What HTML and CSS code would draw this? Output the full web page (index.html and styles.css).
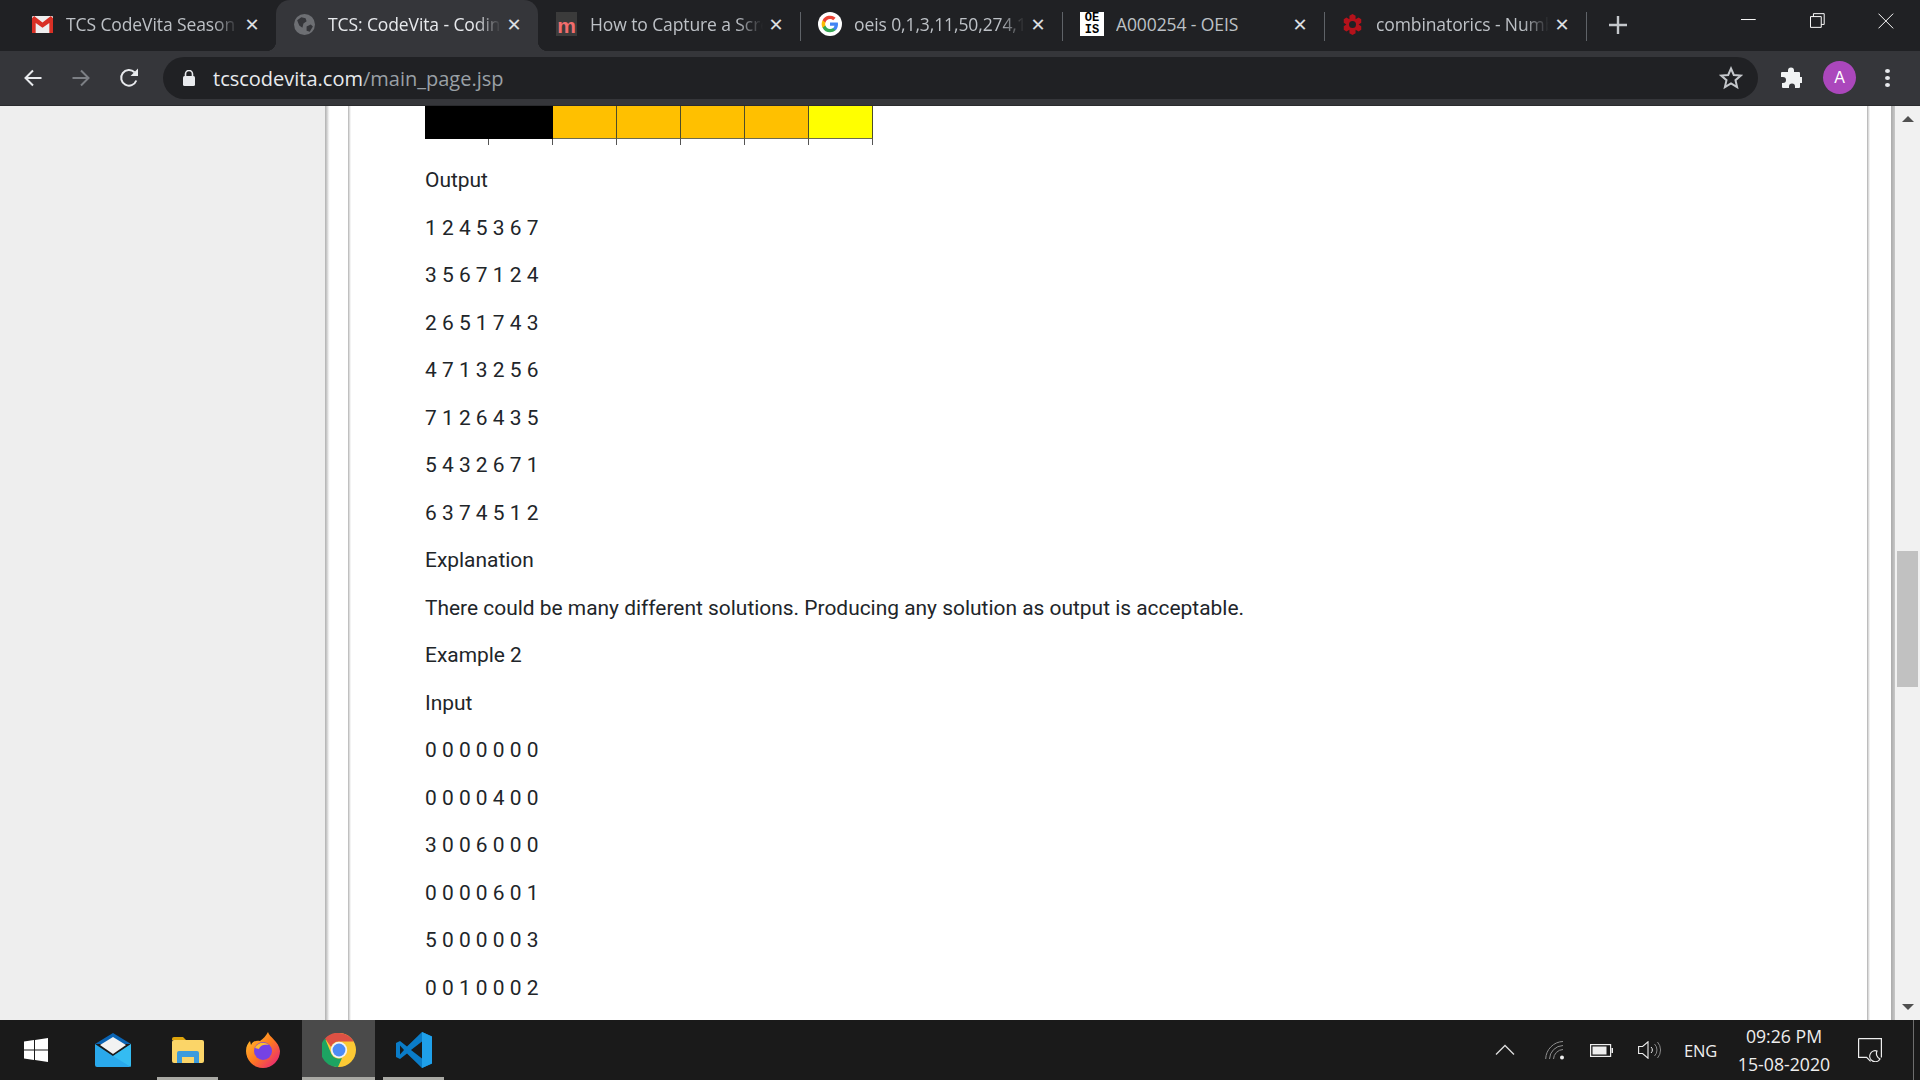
FILE: index.html
```html
<!DOCTYPE html>
<html>
<head>
	<title>TCS: CodeVita - Coding</title>
	<link rel="stylesheet" href="styles.css">
</head>
<body>

<!--Tab strip -->
<div class="tabstrip">
	<div class="tab">
		<svg class="favicon" viewBox="0 0 20 16"><rect width="20" height="16" rx="1" fill="#eee"/><path d="M0 2v14h3.500V6.500L10 11l6.500-4.500V16H20V2l-2-2-8 6-8-6z" fill="#d93025"/></svg>
		<span class="tab-title">TCS CodeVita Season 9</span>
		<span class="tab-close">&#x2715;</span>
	</div>
	<div class="tab active">
		<svg class="favicon" viewBox="0 0 20 20"><circle cx="10" cy="10" r="10" fill="#6d6f73"/><path d="M3 6l4-3 4 1 1 3-3 2-1 4-3-2zM12 12l4-2 2 2-3 5-3-1z" fill="#35363a"/></svg>
		<span class="tab-title">TCS: CodeVita - Coding Contest</span>
		<span class="tab-close">&#x2715;</span>
	</div>
	<div class="tab sep">
		<span class="favicon fav-m">m</span>
		<span class="tab-title">How to Capture a Screenshot</span>
		<span class="tab-close">&#x2715;</span>
	</div>
	<div class="tab sep">
		<svg class="favicon fav-g" viewBox="0 0 24 24"><circle cx="12" cy="12" r="12" fill="#fff"/><path d="M20 12.200c0-.6-.1-1.200-.2-1.700H12v3.200h4.500a3.900 3.900 0 0 1-1.700 2.500v2.100h2.700c1.600-1.400 2.500-3.500 2.500-6.100z" fill="#4285f4"/><path d="M12 20.300c2.200 0 4.100-.7 5.500-2l-2.700-2.100c-.7.500-1.700.8-2.800.8-2.200 0-4-1.500-4.600-3.400H4.600v2.200a8.300 8.300 0 0 0 7.400 4.500z" fill="#34a853"/><path d="M7.400 13.600a5 5 0 0 1 0-3.200V8.200H4.600a8.300 8.300 0 0 0 0 7.600z" fill="#fbbc05"/><path d="M12 7c1.200 0 2.300.4 3.200 1.200l2.400-2.400A8.300 8.300 0 0 0 4.600 8.200l2.800 2.200C8 8.500 9.800 7 12 7z" fill="#ea4335"/></svg>
		<span class="tab-title">oeis 0,1,3,11,50,274,1764 - Google</span>
		<span class="tab-close">&#x2715;</span>
	</div>
	<div class="tab sep">
		<span class="favicon fav-oeis"><span>OE</span><span>IS</span></span>
		<span class="tab-title plain">A000254 - OEIS</span>
		<span class="tab-close">&#x2715;</span>
	</div>
	<div class="tab sep">
		<svg class="favicon" viewBox="0 0 20 24"><path d="M10 0l3.500 2v4L17 4l3 2v4l-3 2 3 2v4l-3 2-3.500-2v4L10 24l-3.500-2v-4L3 20l-3-2v-4l3-2-3-2V6l3-2 3.500 2V2z" fill="#b5121b"/><circle cx="10" cy="12" r="4" fill="#202124"/></svg>
		<span class="tab-title">combinatorics - Number of</span>
		<span class="tab-close">&#x2715;</span>
	</div>
	<svg class="new-tab" viewBox="0 0 18 18"><path d="M9 0v18M0 9h18" stroke="#c4c7cb" stroke-width="2.400"/></svg>
	<div class="window-btns">
		<svg width="16" height="16" viewBox="0 0 16 16"><path d="M0 6.500h15" stroke="#fff"/></svg>
		<svg width="16" height="16" viewBox="0 0 16 16"><path d="M.5 3.500h11v11H.5zM3.500 3.500V.5h11v11h-3" fill="none" stroke="#fff"/></svg>
		<svg width="16" height="16" viewBox="0 0 16 16"><path d="M.5.500l15 15M15.500.5l-15 15" stroke="#fff"/></svg>
	</div>
</div>

<!--Address bar -->
<div class="toolbar">
	<svg class="tool-icon first" viewBox="0 0 20 20"><path d="M18.500 10H3M10 2.500L2.500 10l7.500 7.500" fill="none" stroke="#e8eaed" stroke-width="2"/></svg>
	<svg class="tool-icon" viewBox="0 0 20 20"><path d="M1.500 10H17M10 2.500l7.500 7.500-7.500 7.500" fill="none" stroke="#7c7f84" stroke-width="2"/></svg>
	<svg class="tool-icon reload" viewBox="0 0 20 20"><path d="M17.300 12.500A7.800 7.800 0 1 1 15.500 4.300" fill="none" stroke="#e8eaed" stroke-width="2"/><path d="M19 .5V8h-7.500z" fill="#e8eaed"/></svg>
	<div class="omnibox">
		<svg class="lock" viewBox="0 0 12 16"><path d="M2.500 6V4a3.500 3.500 0 0 1 7 0v2" fill="none" stroke="#e8eaed" stroke-width="1.600"/><rect y="6" width="12" height="10" rx="1.500" fill="#e8eaed"/></svg>
		<span class="url">tcscodevita.com<span class="url-path">/main_page.jsp</span></span>
		<svg class="star" viewBox="0 0 24 24"><path d="M12 2.500l2.800 6.500 7 .6-5.300 4.600 1.600 6.900-6.100-3.700-6.100 3.700 1.600-6.900L2.200 9.600l7-.6z" fill="none" stroke="#c4c7cb" stroke-width="2"/></svg>
	</div>
	<svg class="puzzle" viewBox="0 0 22 22"><path d="M8 3.500a3 3 0 0 1 6 0V5h5a1 1 0 0 1 1 1v4h1.500a3 3 0 0 1 0 6H20v4a1 1 0 0 1-1 1h-4v-1.500a3 3 0 0 0-6 0V21H3a1 1 0 0 1-1-1v-4h1a3 3 0 0 0 0-6H1V6a1 1 0 0 1 1-1h6z" fill="#f1f3f4"/></svg>
	<div class="avatar">A</div>
	<div class="kebab"><i></i><i></i><i></i></div>
</div>

<!--Page -->
<div class="viewport">
	<div class="side"></div>
	<div class="wrap">
		<div class="card">
			<div class="grid-row">
				<div class="cell black"></div><div class="cell black"></div>
				<div class="cell amber"></div><div class="cell amber"></div><div class="cell amber"></div><div class="cell amber"></div>
				<div class="cell yellow"></div>
			</div>
			<div class="grid-ticks">
				<div class="tick"></div><div class="tick"></div><div class="tick"></div><div class="tick"></div><div class="tick"></div><div class="tick"></div><div class="tick last"></div>
			</div>
			<p>Output</p>
			<p>1 2 4 5 3 6 7</p>
			<p>3 5 6 7 1 2 4</p>
			<p>2 6 5 1 7 4 3</p>
			<p>4 7 1 3 2 5 6</p>
			<p>7 1 2 6 4 3 5</p>
			<p>5 4 3 2 6 7 1</p>
			<p>6 3 7 4 5 1 2</p>
			<p>Explanation</p>
			<p>There could be many different solutions. Producing any solution as output is acceptable.</p>
			<p>Example 2</p>
			<p>Input</p>
			<p>0 0 0 0 0 0 0</p>
			<p>0 0 0 0 4 0 0</p>
			<p>3 0 0 6 0 0 0</p>
			<p>0 0 0 0 6 0 1</p>
			<p>5 0 0 0 0 0 3</p>
			<p>0 0 1 0 0 0 2</p>
		</div>
	</div>
	<div class="scrollbar">
		<div class="arrow up"></div>
		<div class="track"><div class="thumb"></div></div>
		<div class="arrow down"></div>
	</div>
</div>

<!--Windows taskbar -->
<div class="taskbar">
	<svg class="start" viewBox="0 0 24 24"><path d="M0 3.500l10-1.400v9.300H0zM11 2l13-2v11.400H11zM0 12.500h10v9.400L0 20.500zM11 12.500h13V24l-13-2z" fill="#fff"/></svg>
	<div class="task">
		<svg width="36" height="34" viewBox="0 0 36 34"><path d="M0 11L18 0l18 11z" fill="#0a64b4"/><path d="M5 12L18 4l13 8-13 9z" fill="#f2f2f2"/><path d="M0 11l18 12 18-12v21a2 2 0 0 1-2 2H2a2 2 0 0 1-2-2z" fill="#2aa9ec"/><path d="M18 23l18-12v23z" fill="#3ccaf6" opacity=".6"/></svg>
	</div>
	<div class="task open">
		<svg width="32" height="26" viewBox="0 0 32 26"><path d="M0 2a2 2 0 0 1 2-2h9l3 3h-14z" fill="#dea40b"/><rect y="3" width="32" height="23" rx="2" fill="#fbd568"/><path d="M5 16a2 2 0 0 1 2-2h18a2 2 0 0 1 2 2v10h-5v-6H10v6H5z" fill="#3c9bdc"/></svg>
	</div>
	<div class="task">
		<svg width="34" height="36" viewBox="0 0 34 36"><defs><linearGradient id="fx" x1="0" y1="0" x2="1" y2="1"><stop offset="0" stop-color="#ffcb2e"/><stop offset=".5" stop-color="#ff7a1f"/><stop offset="1" stop-color="#e31587"/></linearGradient></defs><path d="M22 0c1 5 11 9 12 19a17 17 0 0 1-34 0c0-5 2-8 4-10l1 4c2-4 6-5 9-4 3-2 6-5 8-9z" fill="url(#fx)"/><circle cx="17" cy="19" r="9" fill="#7542e5"/><path d="M9 16c2-5 9-7 14-3-4-1-9 0-10 4z" fill="#ffbd2e"/></svg>
	</div>
	<div class="task chrome open">
		<svg width="34" height="34" viewBox="0 0 34 34"><circle cx="17" cy="17" r="17" fill="#fcc934"/><path d="M17 0a17 17 0 0 1 14.700 8.500H17a8.500 8.500 0 0 0-8 5.600L3 5.500A17 17 0 0 1 17 0z" fill="#dd5144"/><path d="M3 5.500l6.500 15.700A8.500 8.500 0 0 0 20 25l-4 9A17 17 0 0 1 3 5.500z" fill="#1da462"/><circle cx="17" cy="17" r="8.200" fill="#f1f3f4"/><circle cx="17" cy="17" r="6.400" fill="#4c8bf5"/></svg>
	</div>
	<div class="task open">
		<svg width="36" height="36" viewBox="0 0 36 36"><path d="M26 0l10 4.500v27L26 36 11 21.500 4 27l-4-2v-14l4-2 7 5.500z" fill="#0a7cc8"/><path d="M26 0l10 4.500v27L26 36z" fill="#1fa0ea"/><path d="M26 9.500L15 18l11 8.500z" fill="#1a1a1a"/><path d="M4 13.500v9l4-4.500z" fill="#1a1a1a"/></svg>
	</div>
	<div class="tray">
		<svg class="chevron" viewBox="0 0 20 12"><path d="M1 10.500l9-9 9 9" fill="none" stroke="#ddd" stroke-width="1.300"/></svg>
		<svg class="wifi" viewBox="0 0 20 20"><path d="M.7 19A18 18 0 0 1 18 1.500M4.500 19A14 14 0 0 1 18 5.500M8.500 19A10 10 0 0 1 18 9.500" fill="none" stroke="#8f8f8f" stroke-width="1"/><circle cx="17" cy="17.500" r="2" fill="#eee"/></svg>
		<svg class="battery" viewBox="0 0 23 13"><rect x=".6" y=".6" width="20" height="11.800" fill="none" stroke="#eee" stroke-width="1.200"/><rect x="2.500" y="2.500" width="14" height="8" fill="#eee"/><rect x="21.500" y="4" width="1.500" height="5" fill="#eee"/></svg>
		<svg class="speaker" viewBox="0 0 23 18"><path d="M.6 5.500h4L10 .8v16.400l-5.400-4.700h-4z" fill="none" stroke="#eee" stroke-width="1.100"/><path d="M13 6a4 4 0 0 1 0 6" fill="none" stroke="#eee"/><path d="M16.500 3a8.500 8.500 0 0 1 0 12M19.500 1a12 12 0 0 1 0 16" fill="none" stroke="#888"/></svg>
		<span class="lang">ENG</span>
		<div class="clock"><span>09:26 PM</span><span>15-08-2020</span></div>
		<svg class="notify" viewBox="0 0 24 24"><path d="M.6.600h22.800v19M.6.600v18.800h8l4 4" fill="none" stroke="#eee" stroke-width="1.200"/><path d="M19 13a5.500 5.500 0 1 0 3 8 6 6 0 0 1-3-8z" fill="none" stroke="#eee" stroke-width="1.200"/></svg>
	</div>
	<div class="show-desktop"></div>
</div>

</body>
</html>
```

FILE: styles.css
```css
* {
	box-sizing: border-box;
}

body {
	margin: 0;
	height: 1080px;
	overflow: hidden;
	display: flex;
	flex-direction: column;
	font-family: "Open Sans", sans-serif;
}

/* tab strip */
.tabstrip {
	height: 51px;
	flex: none;
	background-color: #202124;
	display: flex;
	padding-left: 14px;
}

.tab {
	position: relative;
	width: 262px;
	display: flex;
	align-items: center;
	padding: 0 16px 3px 18px;
	color: #bdc1c6;
	font-size: 17.500px;
	letter-spacing: -0.1px;
}

.tab.active {
	background-color: #35363a;
	color: #e8eaed;
	border-radius: 14px 14px 0 0;
}

/* little flares at the bottom corners of the open tab */
.tab.active::before,
.tab.active::after {
	content: "";
	position: absolute;
	bottom: 0;
	width: 10px;
	height: 10px;
}

.tab.active::before {
	left: -10px;
	background: radial-gradient(circle at 0 0, transparent 10px, #35363a 10.500px);
}

.tab.active::after {
	right: -10px;
	background: radial-gradient(circle at 100% 0, transparent 10px, #35363a 10.500px);
}

.tab.sep::after {
	content: "";
	position: absolute;
	right: -1px;
	top: 12px;
	height: 29px;
	border-right: 1px solid #5f6368;
}

.favicon {
	width: 21px;
	height: 21px;
	flex: none;
	margin-right: 13px;
}

.fav-g {
	width: 24px;
	height: 24px;
	margin-right: 12px;
}

.fav-m {
	background-color: #3b3b3b;
	color: #f26d6d;
	font-family: "Liberation Sans", sans-serif;
	font-weight: bold;
	font-size: 21px;
	line-height: 27px;
	height: 24px;
	overflow: hidden;
	text-align: center;
	letter-spacing: 0;
}

.fav-oeis {
	width: 24px;
	height: 24px;
	margin-right: 12px;
	background-color: #fff;
	color: #000;
	font-family: "Liberation Mono", monospace;
	font-weight: bold;
	font-size: 12px;
	line-height: 12px;
	display: flex;
	flex-direction: column;
	align-items: center;
	letter-spacing: 0;
}

.tab-title {
	flex: 1;
	overflow: hidden;
	white-space: nowrap;
	-webkit-mask-image: linear-gradient(to right, #000 85%, transparent 100%);
	mask-image: linear-gradient(to right, #000 85%, transparent 100%);
}

.tab-title.plain {
	-webkit-mask-image: none;
	mask-image: none;
}

.tab-close {
	flex: none;
	width: 16px;
	margin-left: 5px;
	font-size: 18px;
	font-family: "DejaVu Sans", sans-serif;
	color: #dadce0;
	text-align: center;
}

.new-tab {
	width: 18px;
	height: 18px;
	margin: 16px 0 0 23px;
	flex: none;
}

.window-btns {
	margin-left: auto;
	display: flex;
	gap: 53px;
	padding: 13px 26px 0 0;
	width: 179px;
}

/* address bar */
.toolbar {
	height: 55px;
	flex: none;
	background-color: #35363a;
	border-bottom: 1px solid #2a2b2e;
	display: flex;
	align-items: center;
	padding-bottom: 1px;
}

.tool-icon {
	width: 20px;
	height: 20px;
	flex: none;
	margin-left: 28px;
}

.tool-icon.first {
	margin-left: 23px;
}

.omnibox {
	margin-left: 24px;
	width: 1595px;
	height: 42px;
	border-radius: 21px;
	background-color: #202124;
	display: flex;
	align-items: center;
	padding: 0 15px 0 20px;
}

.lock {
	width: 12px;
	height: 16px;
	flex: none;
}

.url {
	margin-left: 18px;
	padding-top: 1px;
	color: #e8eaed;
	font-size: 20px;
}

.url-path {
	color: #9aa0a6;
}

.star {
	margin-left: auto;
	width: 24px;
	height: 24px;
}

.puzzle {
	width: 22px;
	height: 22px;
	flex: none;
	margin-left: 22px;
}

.avatar {
	width: 33px;
	height: 33px;
	flex: none;
	margin-left: 21px;
	border-radius: 50%;
	background-color: #ab47bc;
	color: #fff;
	font-family: "Liberation Sans", sans-serif;
	font-size: 16px;
	line-height: 33px;
	text-align: center;
}

.kebab {
	margin-left: 29px;
	display: flex;
	flex-direction: column;
	gap: 3px;
}

.kebab i {
	width: 5px;
	height: 4px;
	border-radius: 50%;
	background-color: #e8eaed;
}

/* page */
.viewport {
	flex: 1;
	min-height: 0;
	overflow: hidden;
	display: flex;
	background-color: #fff;
}

.side {
	width: 325px;
	flex: none;
	background-color: #eee;
}

.wrap {
	flex: 1;
	padding: 0 4px 0 23px;
	background:
		linear-gradient(to right, #b0b0b0, #cfcfcf 2px, #f8f8f8 4px, #fff 5px) left / 6px 100% no-repeat,
		linear-gradient(to right, #aaa, #c8c8c8) right / 4px 100% no-repeat,
		#fff;
}

.card {
	width: 1522px;
	height: 100%;
	overflow: hidden;
	background:
		linear-gradient(to right, #b0b0b0, #d0d0d0 1px, #fff 3px) left / 3px 100% no-repeat,
		linear-gradient(to right, #aaa, #d0d0d0 1px, #fbfbfb 3px) right / 3px 100% no-repeat,
		#fff;
	padding-left: 77px;
	font-family: Roboto, sans-serif;
	font-size: 20.930px;
	color: #212529;
}

.card p {
	margin: 0 0 20px;
	line-height: 27.500px;
}

.grid-row {
	display: flex;
	height: 33px;
}

.cell {
	width: 64px;
	border-right: 1px solid #4d4d2a;
	border-bottom: 1px solid #6b6b50;
}

.cell.black {
	background-color: #000;
	border-color: #000;
}

.cell.amber {
	background-color: #ffc000;
}

.cell.yellow {
	background-color: #ff0;
}

.grid-ticks {
	display: flex;
	height: 6px;
	margin-bottom: 22px;
}

.tick {
	width: 64px;
	border-right: 1px solid #555;
}

/* scrollbar */
.scrollbar {
	width: 25px;
	flex: none;
	background-color: #f1f1f1;
	display: flex;
	flex-direction: column;
	align-items: center;
}

.arrow {
	width: 0;
	height: 0;
	flex: none;
	margin: 10px 0;
	border-left: 6px solid transparent;
	border-right: 6px solid transparent;
}

.arrow.up {
	border-bottom: 6px solid #505050;
}

.arrow.down {
	border-top: 6px solid #505050;
}

.track {
	flex: 1;
	width: 21px;
	padding-top: 419px;
}

.thumb {
	height: 136px;
	background-color: #c1c1c1;
}

/* taskbar */
.taskbar {
	height: 60px;
	flex: none;
	background-color: #1a1a1a;
	display: flex;
	align-items: center;
	color: #eee;
	position: relative;
}

.start {
	width: 24px;
	height: 24px;
	margin: 0 34px 0 24px;
	flex: none;
}

.task {
	width: 61px;
	height: 60px;
	flex: none;
	display: flex;
	align-items: center;
	justify-content: center;
	border-bottom: 3px solid transparent;
	margin-right: 14px;
	padding-top: 3px;
}

.task.open {
	border-bottom-color: #a9a9a4;
}

.task.chrome {
	width: 73px;
	margin: 0 8px 0 -5px;
	background-color: #4a4a4a;
}

.tray {
	margin-left: auto;
	display: flex;
	align-items: center;
	padding-right: 38px;
}

.chevron {
	width: 20px;
	height: 12px;
}

.wifi {
	width: 20px;
	height: 20px;
	margin-left: 30px;
}

.battery {
	width: 23px;
	height: 13px;
	margin-left: 25px;
}

.speaker {
	width: 23px;
	height: 18px;
	margin-left: 25px;
}

.lang {
	margin-left: 23px;
	font-size: 16.500px;
	letter-spacing: -0.2px;
}

.clock {
	margin-left: 20px;
	width: 94px;
	display: flex;
	flex-direction: column;
	align-items: center;
	font-size: 17.700px;
	line-height: 28px;
	white-space: nowrap;
}

.notify {
	width: 24px;
	height: 24px;
	margin-left: 27px;
}

.show-desktop {
	position: absolute;
	right: 6px;
	top: 0;
	bottom: 0;
	border-left: 1px solid #6e6e6e;
}
```
